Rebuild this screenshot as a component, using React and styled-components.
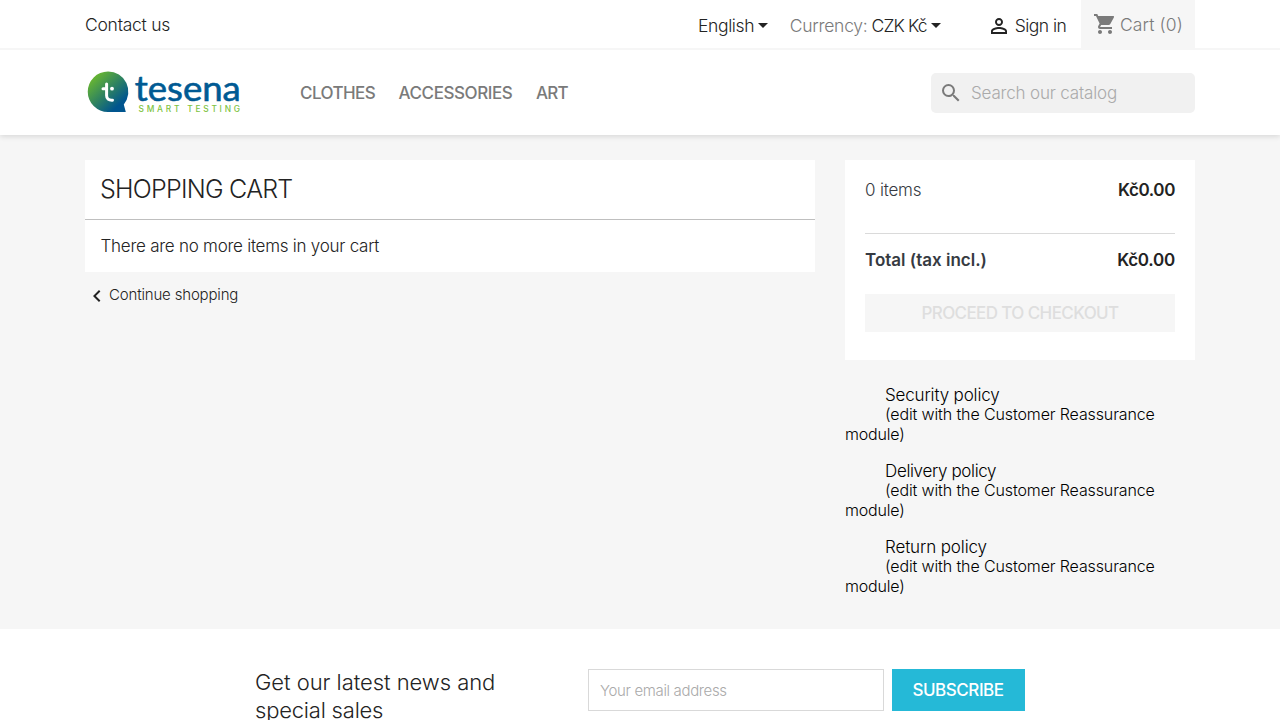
import React from "react";
import styled, { createGlobalStyle } from "styled-components";
import { MdPersonOutline, MdShoppingCart, MdSearch, MdChevronLeft } from "react-icons/md";

const GlobalStyle = createGlobalStyle`
  *, *::before, *::after { box-sizing: border-box; }
  html, body { margin: 0; height: 720px; overflow: hidden; }
  body {
    background: #fff;
    color: #232323;
    font-family: Inter, "Liberation Sans", sans-serif;
    font-size: 17px;
    line-height: 24px;
    font-weight: 300;
  }
  h1, p { margin: 0; font-weight: inherit; }
`;

const Text = styled.span`
  font-size: ${(p) => p.$size || 17}px;
  font-weight: ${(p) => p.$weight || 300};
  letter-spacing: ${(p) => p.$spacing || 0}px;
  color: ${(p) => p.$color || "inherit"};
  white-space: nowrap;
`;

const Container = styled.div`
  width: 1110px;
  margin: 0 auto;
  display: flex;
`;

const Header = styled.header`
  position: relative;
  background: #fff;
  height: 135px;
  box-shadow: 0 2px 5px 0 rgba(0, 0, 0, 0.11);
`;

const TopBar = styled.nav`
  height: 50px;
  border-bottom: 2px solid #f6f6f6;
`;

const TopBarInner = styled(Container)`
  height: 48px;
  align-items: center;
  padding-top: 1px;
`;

const Selector = styled.div`
  display: flex;
  align-items: center;
  gap: 4px;
  margin: 2px 0 0 ${(p) => p.$left || 0}px;
`;

const Caret = styled.i`
  width: 0;
  height: 0;
  border: 5.5px solid transparent;
  border-top: 5px solid #232323;
  border-bottom: 0;
`;

const CartBox = styled.div`
  width: 114px;
  height: 48px;
  margin: -1px 0 0 auto;
  padding-left: 12px;
  display: flex;
  align-items: center;
  gap: 3px;
  background: #f6f6f6;
  color: #7a7a7a;
`;

const CartLabel = styled(Text)`
  padding-top: 2px;
`;

const MainBar = styled(Container)`
  height: 85px;
  align-items: center;
`;

const Logo = styled.svg`
  display: block;
  width: 160px;
  height: 50px;
  margin-bottom: 4px;
`;

const Menu = styled.nav`
  display: flex;
  gap: 23.5px;
  margin-left: 55px;
  color: #7a7a7a;
`;

const Search = styled.label`
  width: 264px;
  height: 40px;
  margin: 1px 0 0 auto;
  padding-left: 8px;
  display: flex;
  align-items: center;
  gap: 8px;
  border-radius: 5px;
  background: #f1f1f1;
  color: #7a7a7a;
`;

const Main = styled.main`
  height: 494px;
  padding-top: 25px;
  background: #f6f6f6;
`;

const Columns = styled(Container)`
  gap: 30px;
`;

const CartColumn = styled.section`
  width: 730px;
`;

const Aside = styled.aside`
  width: 350px;
`;

const Card = styled.div`
  background: #fff;
`;

const CardTitle = styled.h1`
  height: 60px;
  padding: 14px 15px 0;
  border-bottom: 1px solid #bfbfbf;
`;

const CardBody = styled.p`
  height: 52px;
  padding: 14px 15.5px;
`;

const BackLink = styled.a`
  display: flex;
  align-items: center;
  height: 24px;
  margin-top: 12px;
`;

const BackLabel = styled(Text)`
  padding-bottom: 2px;
`;

const Summary = styled(Card)`
  height: 200px;
  padding: 18px 20px 0;
`;

const SummaryRow = styled.div`
  display: flex;
  justify-content: space-between;
  color: #363a42;
`;

const Divider = styled.hr`
  height: 1px;
  margin: 31px 0 14px;
  border: 0;
  background: #dadada;
`;

const Checkout = styled.button`
  display: block;
  width: 310px;
  height: 38px;
  margin-top: 22px;
  padding: 0;
  border: 0;
  background: #f6f6f6;
  font: inherit;
`;

const Policies = styled.div`
  margin-top: 25px;
  display: flex;
  flex-direction: column;
  gap: 16px;
  color: #000;
`;

const Policy = styled.div`
  display: flex;
  flex-direction: column;
  line-height: 20px;
`;

const PolicyName = styled(Text)`
  margin: 0 0 -1px 40px;
`;

const PolicyNote = styled(Text)`
  margin-left: 40px;
`;

const PolicyEnd = styled(Text)`
  margin-bottom: 1px;
`;

const Newsletter = styled.footer`
  width: 770px;
  margin: 0 auto;
  padding-top: 40px;
  display: flex;
`;

const Pitch = styled.p`
  width: 333px;
  margin-top: -1px;
  display: flex;
  flex-direction: column;
  line-height: 28px;
`;

const EmailField = styled.div`
  width: 296px;
  height: 42px;
  padding: 8px 11px;
  border: 1px solid #d9d9d9;
`;

const Subscribe = styled.button`
  width: 133px;
  height: 42px;
  margin-left: 8px;
  padding: 0 1px 0 0;
  border: 0;
  background: #25b9d7;
  color: #fff;
  font: inherit;
`;

const policies = [
  { name: "Security policy", spacing: -0.16 },
  { name: "Delivery policy", spacing: -0.35 },
  { name: "Return policy", spacing: -0.12 },
];

function TesenaLogo() {
  return (
    <Logo viewBox="0 0 160 50" role="img" aria-label="tesena smart testing">
      <defs>
        <linearGradient id="bubble" x1="0.1" y1="0.1" x2="0.85" y2="0.9">
          <stop offset="0" stopColor="#6ebb2c" />
          <stop offset="0.5" stopColor="#2f8360" />
          <stop offset="0.9" stopColor="#00558f" />
        </linearGradient>
      </defs>
      <path d="M23 5.5a20.2 20.2 0 1 0 0 40.5H40.8L38.8 38.5A20.2 20.2 0 0 0 23 5.5Z" fill="url(#bubble)" />
      <path d="M21.6 18V29.5Q21.6 34.5 27.5 34.2M18 22.7H21.6" fill="none" stroke="#fff" strokeWidth="3" strokeLinecap="round" />
      <circle cx="27" cy="22.7" r="1.9" fill="#fff" />
      <text x="49.8" y="34.5" textLength="106" lengthAdjust="spacingAndGlyphs" fontFamily="Lato" fontSize="34" fontWeight="400" fill="#005a93" stroke="#005a93" strokeWidth="0.6">tesena</text>
      <text x="53.5" y="46.2" textLength="101.5" fontFamily="Inter" fontSize="8.4" fontWeight="500" fill="#80c342">SMART TESTING</text>
    </Logo>
  );
}

export default function App() {
  return (
    <>
      <GlobalStyle />
      <Header>
        <TopBar>
          <TopBarInner>
            <Text $size={17.5} $spacing={-0.26}>Contact us</Text>
            <Selector $left={528}>
              <Text $size={17.5} $spacing={-0.38}>English</Text>
              <Caret />
            </Selector>
            <Selector $left={21.5}>
              <Text $size={17.5} $spacing={-0.24} $color="#7a7a7a">Currency:</Text>
              <Text $size={17.5} $spacing={-0.85}>CZK Kč</Text>
              <Caret />
            </Selector>
            <Selector $left={46}>
              <MdPersonOutline size={24} />
              <Text $size={17.5} $spacing={-0.55}>Sign in</Text>
            </Selector>
            <CartBox>
              <MdShoppingCart size={24} />
              <CartLabel $size={17.5} $spacing={0.1}>Cart (0)</CartLabel>
            </CartBox>
          </TopBarInner>
        </TopBar>
        <MainBar>
          <TesenaLogo />
          <Menu>
            <Text $weight={500} $spacing={-0.58}>CLOTHES</Text>
            <Text $weight={500} $spacing={-0.42}>ACCESSORIES</Text>
            <Text $weight={500} $spacing={-0.7}>ART</Text>
          </Menu>
          <Search>
            <MdSearch size={24} />
            <Text $color="#aaa" $spacing={-0.17}>Search our catalog</Text>
          </Search>
        </MainBar>
      </Header>
      <Main>
        <Columns>
          <CartColumn>
            <Card>
              <CardTitle><Text $size={25} $spacing={-0.75}>SHOPPING CART</Text></CardTitle>
              <CardBody><Text $spacing={-0.25}>There are no more items in your cart</Text></CardBody>
            </Card>
            <BackLink>
              <MdChevronLeft size={24} />
              <BackLabel $size={15} $spacing={-0.17}>Continue shopping</BackLabel>
            </BackLink>
          </CartColumn>
          <Aside>
            <Summary>
              <SummaryRow>
                <Text $spacing={-0.2}>0 items</Text>
                <Text $weight={600} $spacing={-0.4} $color="#232323">Kč0.00</Text>
              </SummaryRow>
              <Divider />
              <SummaryRow>
                <Text $weight={600}>Total (tax incl.)</Text>
                <Text $weight={600} $spacing={-0.25} $color="#232323">Kč0.00</Text>
              </SummaryRow>
              <Checkout><Text $weight={500} $spacing={-0.6} $color="#dedede">PROCEED TO CHECKOUT</Text></Checkout>
            </Summary>
            <Policies>
              {policies.map((p) => (
                <Policy key={p.name}>
                  <PolicyName $spacing={p.spacing}>{p.name}</PolicyName>
                  <PolicyNote $size={16} $spacing={-0.12}>(edit with the Customer Reassurance</PolicyNote>
                  <PolicyEnd $size={16} $spacing={-0.2}>module)</PolicyEnd>
                </Policy>
              ))}
            </Policies>
          </Aside>
        </Columns>
      </Main>
      <Newsletter>
        <Pitch>
          <Text $size={22} $spacing={-0.05}>Get our latest news and</Text>
          <Text $size={22} $spacing={-0.2}>special sales</Text>
        </Pitch>
        <EmailField><Text $size={15} $spacing={-0.35} $color="#aaa">Your email address</Text></EmailField>
        <Subscribe><Text $weight={500} $spacing={-0.45}>SUBSCRIBE</Text></Subscribe>
      </Newsletter>
    </>
  );
}
